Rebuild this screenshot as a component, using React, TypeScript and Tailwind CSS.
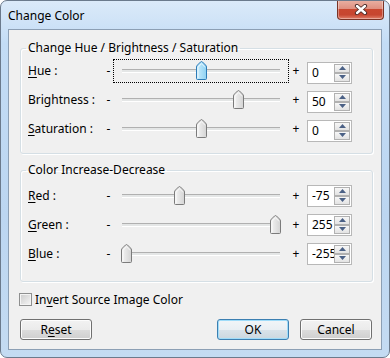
import type { ReactNode } from 'react';

const U = ({ children }: { children: ReactNode }) => (
  <span className="underline decoration-1 underline-offset-[2px]">{children}</span>
);

function Thumb({ active }: { active?: boolean }) {
  const id = active ? 'thumbA' : 'thumbN';
  return (
    <svg width="11" height="19" viewBox="0 0 11 19" className="block">
      <defs>
        <linearGradient id={id} x1="0" y1="0" x2="1" y2="0">
          {active ? (
            <>
              <stop offset="0" stopColor="#c9ecfc" />
              <stop offset="1" stopColor="#8fd2f3" />
            </>
          ) : (
            <>
              <stop offset="0" stopColor="#f4f4f4" />
              <stop offset="1" stopColor="#d4d4d4" />
            </>
          )}
        </linearGradient>
      </defs>
      <path
        d="M1.5 18.5 Q0.5 18.5 0.5 17.5 V6 Q0.5 5 1.5 4 L4.5 1 Q5.5 0 6.5 1 L9.5 4 Q10.5 5 10.5 6 V17.5 Q10.5 18.5 9.5 18.5 Z"
        fill={`url(#${id})`}
        stroke={active ? '#2c7bb7' : '#7b7b7b'}
      />
      <path
        d="M2 17 V6.3 L5.5 2.6 L9 6.3"
        fill="none"
        stroke="#ffffff"
        strokeOpacity={0.7}
      />
    </svg>
  );
}

function Slider({ value, min, max, focused }: { value: number; min: number; max: number; focused?: boolean }) {
  const pct = (value - min) / (max - min);
  const left = 13 + pct * 149 - 5;
  return (
    <div
      className={`relative flex h-[24px] w-[176px] flex-col px-[8px] pt-[9px] ${
        focused ? 'border border-dotted border-black' : 'border border-transparent'
      }`}
    >
      <div className="h-[3px] w-full border-t border-[#b0b0b0] bg-[#e4e6e6] shadow-[0_1px_0_#ffffff]" />
      <div className="absolute top-[1px]" style={{ left: left - 1 }}>
        <Thumb active={focused} />
      </div>
    </div>
  );
}

function SpinBtn({ up }: { up?: boolean }) {
  return (
    <div className="flex h-[9px] items-center justify-center border border-[#b1b1b1] bg-[linear-gradient(#f7f7f7,#e3e3e3)]">
      <svg width="7" height="4" viewBox="0 0 7 4">
        <path d={up ? 'M0 4 L3.5 0 L7 4 Z' : 'M0 0 L3.5 4 L7 0 Z'} fill="#4b6186" />
      </svg>
    </div>
  );
}

function Spin({ value, shift }: { value: string; shift?: boolean }) {
  return (
    <div className={`flex h-[22px] w-[45px] border border-[#b8b8b8] bg-white ${shift ? 'mt-[4px]' : ''}`}>
      <div className="flex-1 overflow-hidden whitespace-nowrap pl-[4px] leading-[20px]">{value}</div>
      <div className="flex w-[17px] flex-col py-[1px] pr-[1px]">
        <SpinBtn up />
        <SpinBtn />
      </div>
    </div>
  );
}

function Row({
  label,
  value,
  min,
  max,
  focused,
  shift,
}: {
  label: ReactNode;
  value: number;
  min: number;
  max: number;
  focused?: boolean;
  shift?: boolean;
}) {
  return (
    <div className="flex h-[29px] items-center">
      <div className="w-[76px]">{label}</div>
      <div className="w-[9px] text-center">-</div>
      <Slider value={value} min={min} max={max} focused={focused} />
      <div className="w-[14px] text-center">+</div>
      <div className="ml-[4px]">
        <Spin value={String(value)} shift={shift} />
      </div>
    </div>
  );
}

function Group({ title, children, className }: { title: string; children: ReactNode; className?: string }) {
  return (
    <fieldset className={`rounded-[3px] border border-[#d5dfe5] px-[7px] shadow-[inset_1px_1px_0_#ffffff,1px_1px_0_#ffffff] ${className ?? ''}`}>
      <legend className="-ml-[2px] px-[2px] leading-[16px]">{title}</legend>
      {children}
    </fieldset>
  );
}

function Button({ children, primary }: { children: ReactNode; primary?: boolean }) {
  return (
    <button
      className={`h-[21px] w-[72px] rounded-[3px] border leading-[18px] ${
        primary
          ? 'border-[#3c7fb1] bg-[linear-gradient(#f1f5f8_0%,#e9eff3_50%,#d9e3ea_50%,#cbd7df_100%)] shadow-[inset_0_0_0_1px_#9fdcf9]'
          : 'border-[#707070] bg-[linear-gradient(#f2f2f2_0%,#ebebeb_50%,#dddddd_50%,#cfcfcf_100%)] shadow-[inset_0_0_0_1px_#fcfcfc]'
      }`}
    >
      {children}
    </button>
  );
}

export default function App() {
  return (
    <div className="relative flex h-[358px] w-[390px] flex-col overflow-hidden rounded-[7px] border border-[#6b7a8c] bg-[linear-gradient(#dbeaf9_0%,#c3dcf5_12%,#bcd6f1_60%,#c4dbf2_100%)] text-[12px] text-black [font-family:'Noto_Sans',sans-serif]">
      <div className="flex h-[28px] items-center pl-[7px] pt-[1px] text-[12px]">Change Color</div>
      <div className="absolute right-[5px] -top-[1px] flex h-[20px] w-[47px] items-center justify-center rounded-b-[4px] border border-t-0 border-[#7a3325] bg-[linear-gradient(#eab2a4_0%,#df9080_45%,#c9472f_50%,#c64630_78%,#e1806a_100%)] shadow-[inset_0_0_0_1px_rgba(255,255,255,0.35)]">
        <svg width="14" height="11" viewBox="0 0 14 11">
          <path d="M3 2 L11 9 M11 2 L3 9" stroke="#4a2a26" strokeWidth="4.2" strokeLinecap="round" />
          <path d="M3 2 L11 9 M11 2 L3 9" stroke="#ffffff" strokeWidth="2.4" strokeLinecap="round" />
        </svg>
      </div>
      <div className="mx-[7px] mb-[7px] flex flex-1 flex-col border border-[#8c9fb4] bg-[#f0f0f0] pl-[11px] pr-[8px] pt-[10px]">
        <Group title="Change Hue / Brightness / Saturation" className="pb-[10px]">
          <Row label={<><U>H</U>ue :</>} value={0} min={-180} max={180} focused shift />
          <Row label="Brightness :" value={50} min={-100} max={100} shift />
          <Row label={<><U>S</U>aturation :</>} value={0} min={-100} max={100} shift />
        </Group>
        <Group title="Color Increase-Decrease" className="mt-[8px] pb-[13px] pt-[3px]">
          <Row label={<><U>R</U>ed :</>} value={-75} min={-255} max={255} />
          <Row label={<><U>G</U>reen :</>} value={255} min={-255} max={255} />
          <Row label={<><U>B</U>lue :</>} value={-255} min={-255} max={255} />
        </Group>
        <div className="mt-[11px] flex h-[13px] items-center">
          <div className="-ml-[1px] h-[13px] w-[13px] border border-[#8e8f8f] bg-[linear-gradient(135deg,#cbcbcb,#f6f6f6)] shadow-[inset_0_0_0_1px_#f4f4f4]" />
          <span className="ml-[3px]">
            In<U>v</U>ert Source Image Color
          </span>
        </div>
        <div className="mt-[13px] flex">
          <Button>
            R<U>e</U>set
          </Button>
          <div className="flex-1" />
          <Button primary>OK</Button>
          <div className="w-[11px]" />
          <Button>Cancel</Button>
          <div className="w-[1px]" />
        </div>
      </div>
    </div>
  );
}
